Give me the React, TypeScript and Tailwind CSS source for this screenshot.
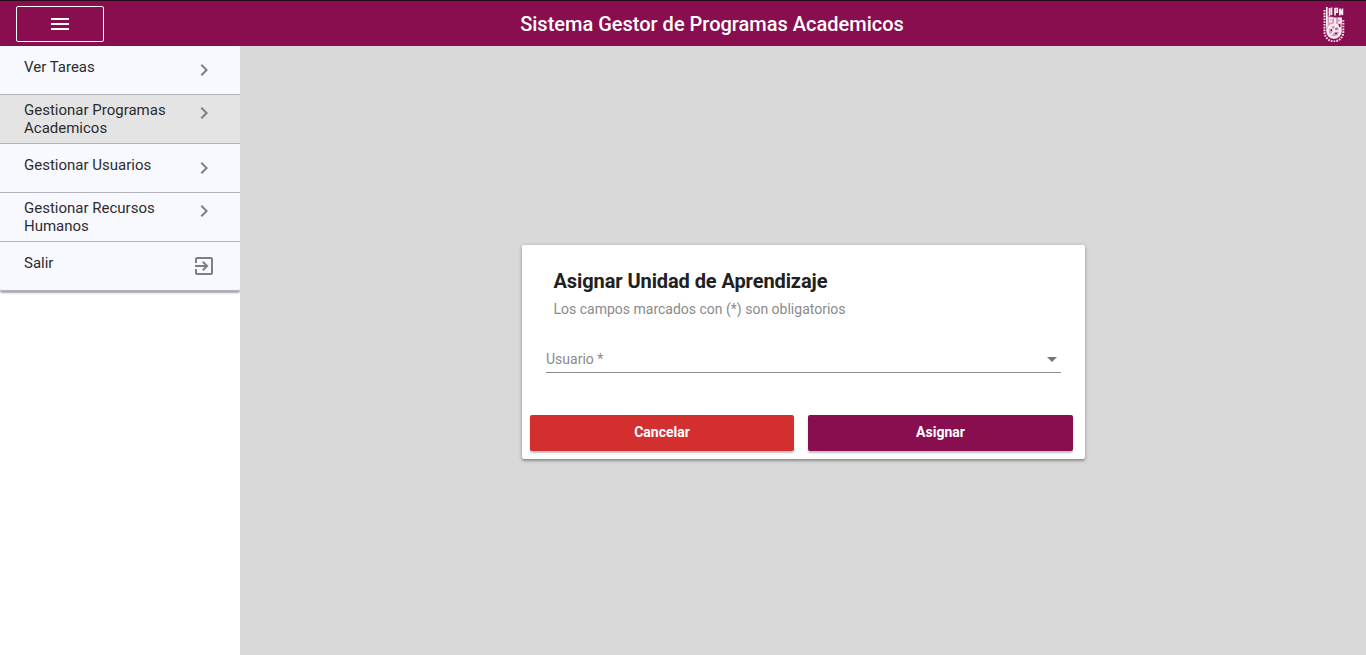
import React from "react";

const Chevron = () => (
  <svg viewBox="0 0 24 24" className="size-6 shrink-0 fill-[#7f7f83]">
    <path d="M10 6 8.59 7.41 13.17 12l-4.58 4.59L10 18l6-6z" />
  </svg>
);

const Exit = () => (
  <svg viewBox="0 0 24 24" className="size-6 shrink-0 fill-[#7f7f83]">
    <path d="M10.09 15.59 11.5 17l5-5-5-5-1.41 1.41L12.67 11H3v2h9.67l-2.58 2.59zM19 3H5c-1.11 0-2 .9-2 2v4h2V5h14v14H5v-4H3v4c0 1.1.89 2 2 2h14c1.1 0 2-.9 2-2V5c0-1.1-.9-2-2-2z" />
  </svg>
);

const Emblem = () => (
  <svg viewBox="0 0 22 36" className="h-9 w-[22px]" fill="none" stroke="#fbeef5">
    <path d="M3 10l16 2v13a8 8 0 0 1-16 0z" fill="#d79cba" stroke="none" />
    <path d="M1.5 4v22a9.3 9.3 0 0 0 18.8 0V13" strokeWidth="2" strokeDasharray="1.6 1.2" />
    <path d="M3.8 1v20M6.5 2v8M8.5 1.5V9M12 9.5V2.5h2.3v3.6H12M16.8 9.5V2.8l2.6 6.2V2.5" strokeWidth="1.7" />
    <path d="M6 12.5h4M6 15.5h3M12 12v7M15 12.5h3v4h-3" strokeWidth="1.8" />
    <circle cx="11" cy="25" r="6.3" strokeWidth="2.2" />
    <path d="M7 21l4 4 3-7M11 25l-3 4M11 25h5" strokeWidth="1.7" />
    <path d="M8.5 23v2M13 22v1.5M12 27.5h2M16.5 18v3" stroke="#880e4f" strokeWidth="1.3" />
  </svg>
);

const items = [
  { label: "Ver Tareas", two: false },
  { label: "Gestionar Programas Academicos", two: true, active: true },
  { label: "Gestionar Usuarios", two: false },
  { label: "Gestionar Recursos Humanos", two: true },
  { label: "Salir", two: false, exit: true },
];

export default function App() {
  return (
    <div className="flex h-[655px] flex-col overflow-hidden bg-white font-[Roboto,sans-serif] text-[#212121]">
      <header className="flex h-[46px] shrink-0 items-center border-t border-[#2a0b1c] bg-[#880e4f] pt-px pr-[21px] pl-4 text-white">
        <button className="flex h-9 w-[88px] items-center justify-center rounded-[2px] border border-white">
          <svg viewBox="0 0 24 24" className="size-6 fill-white">
            <path d="M3 18h18v-2H3v2zm0-5h18v-2H3v2zm0-7v2h18V6H3z" />
          </svg>
        </button>
        <h1 className="flex-1 pr-[3px] text-center text-[20px] font-medium">Sistema Gestor de Programas Academicos</h1>
        <Emblem />
      </header>
      <div className="flex flex-1">
        <aside className="w-60 shrink-0">
          <nav className="rounded-[2px] bg-[#f8f9ff] shadow-[0_2px_2px_0_rgba(0,0,0,0.25),0_1px_3px_0_rgba(0,0,0,0.2)]">
            {items.map((it) => (
              <a
                key={it.label}
                className={
                  "flex h-[49px] items-start justify-between border-b border-[#b3b4bb] pl-6 pr-6 text-[15px] leading-[18px] text-[#2c2c2e] " +
                  (it.active ? "bg-[#e4e4e4] " : "") +
                  (it.exit ? "rounded-b-[2px] " : "") +
                  (it.two ? "pt-1.5" : "pt-3")
                }
              >
                <span className="w-[150px]">{it.label}</span>
                {it.exit ? <Exit /> : <Chevron />}
              </a>
            ))}
          </nav>
        </aside>
        <main className="flex-1 bg-[#d9d9d9] pt-[199px] pl-[282px]">
          <section className="h-[214px] w-[563px] rounded-[2px] bg-white pt-6 shadow-[0_2px_2px_0_rgba(0,0,0,0.2),0_1px_4px_0_rgba(0,0,0,0.25)]">
            <h2 className="pl-[31.5px] text-[20px] leading-6 font-bold tracking-[-0.09px]">Asignar Unidad de Aprendizaje</h2>
            <p className="mt-1.5 pl-[31.5px] text-[14px] leading-5 text-[#8a8a8a]">Los campos marcados con (*) son obligatorios</p>
            <div className="mx-6 mt-[29px] flex h-[25px] items-center justify-between border-b border-[#8c8c8c] pb-0.5 pr-1 text-[14px] text-[#8a8a8a]">
              <span>Usuario *</span>
              <svg viewBox="0 0 10 5" className="h-[5px] w-[10px] fill-[#757575]">
                <path d="M0 0l5 5 5-5z" />
              </svg>
            </div>
            <div className="mt-[42px] flex gap-3.5 pr-3 pl-2 text-[14px] font-bold text-white">
              <button className="h-9 w-[264px] rounded-[2px] bg-[#d32f2f] pb-0.5 shadow-[0_2px_2px_0_rgba(0,0,0,0.25)]">Cancelar</button>
              <button className="h-9 w-[265px] rounded-[2px] bg-[#880e4f] pb-0.5 shadow-[0_2px_2px_0_rgba(0,0,0,0.25)]">Asignar</button>
            </div>
          </section>
        </main>
      </div>
    </div>
  );
}
